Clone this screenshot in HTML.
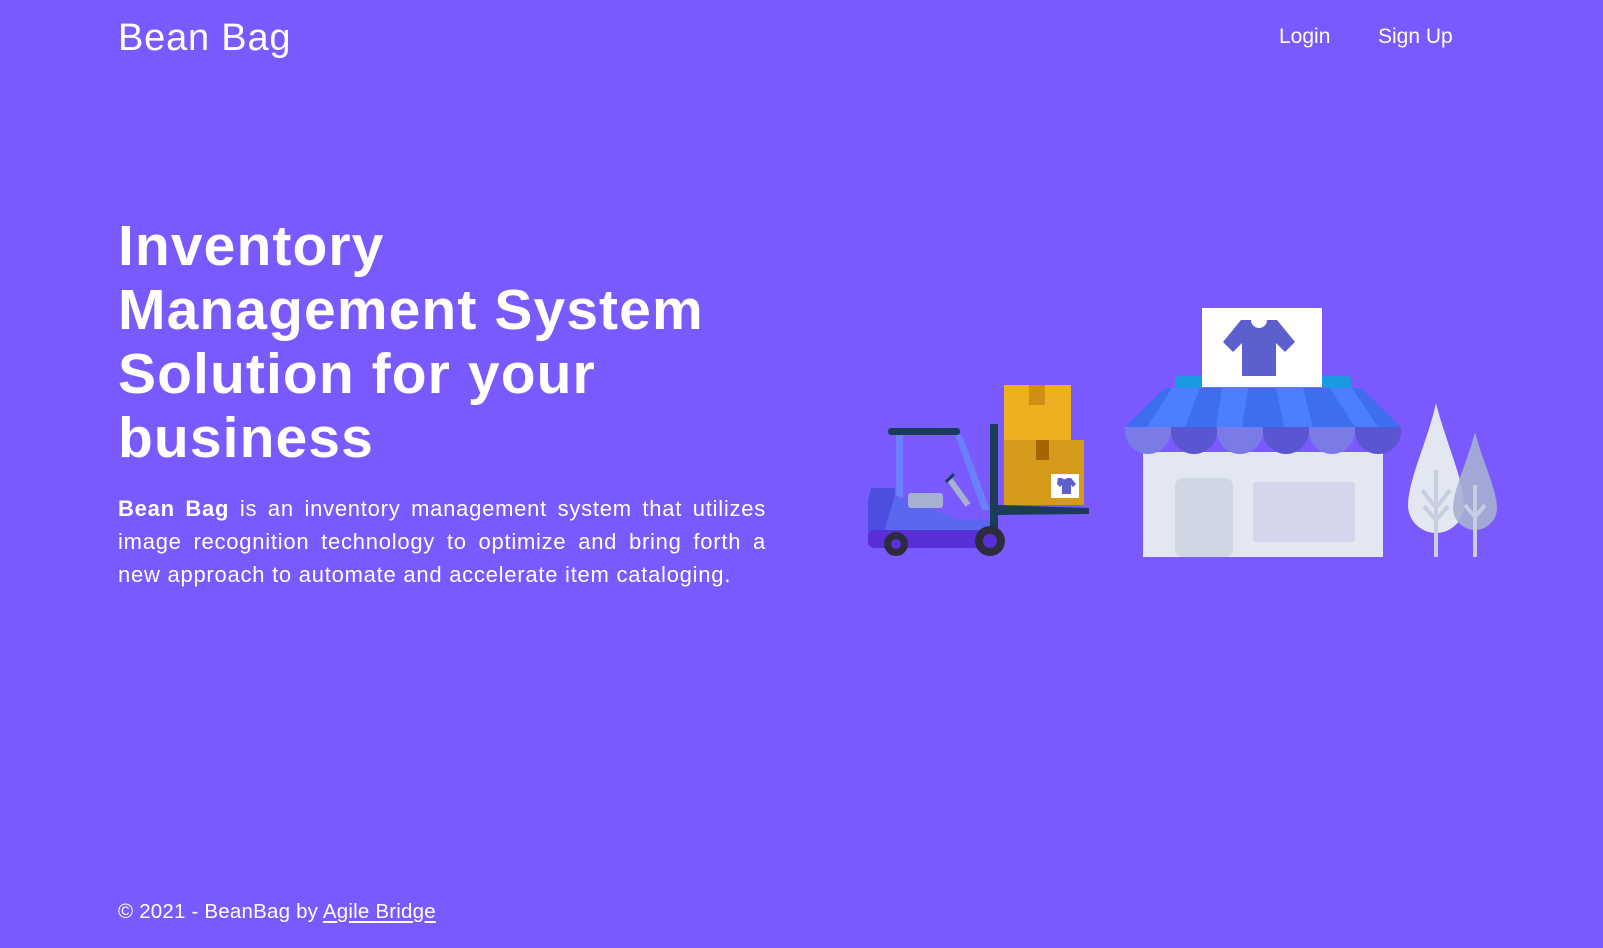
<!DOCTYPE html>
<html><head><meta charset="utf-8"><style>
html,body{margin:0;padding:0;width:1603px;height:948px;overflow:hidden;background:#7a59fe;font-family:"Liberation Sans",sans-serif;color:#fff}
.logo{position:absolute;left:118px;top:17px;font-size:38px;letter-spacing:0.8px}
.nav{position:absolute;top:25px;font-size:21px}
h1{position:absolute;left:118px;top:214px;margin:0;font-size:57px;line-height:64px;font-weight:700;width:740px;letter-spacing:1.1px}
p{position:absolute;left:118px;top:492px;margin:0;width:648px;font-size:22px;line-height:33px;text-align:justify;letter-spacing:0.75px}
.foot{position:absolute;left:118px;top:900px;font-size:20.5px;letter-spacing:0.2px}
.foot u{text-underline-offset:3px}
svg{position:absolute;left:0;top:0}
</style></head><body>
<div class="logo">Bean Bag</div>
<div class="nav" style="left:1279px">Login</div>
<div class="nav" style="left:1378px">Sign Up</div>
<h1>Inventory<br>Management System<br>Solution for your<br>business</h1>
<p><b>Bean Bag</b> is an inventory management system that utilizes image recognition technology to optimize and bring forth a new approach to automate and accelerate item cataloging.</p>
<div class="foot">© 2021 - BeanBag by <u>Agile Bridge</u></div>
<svg width="1603" height="948">
<rect x="1143" y="452" width="240" height="105" fill="#e3e7f2"/>
<rect x="1175" y="478" width="58" height="79" rx="8" fill="#d0d5e3"/>
<rect x="1253" y="482" width="102" height="60" rx="3" fill="#d3d6ea"/>
<rect x="1175" y="376" width="176" height="14" rx="4" fill="#1a9ae0"/>
<polygon points="1165,388 1361,388 1401,427 1125,427" fill="#3d6ef0"/>
<polygon points="1172,388 1200,388 1185,427 1147,427" fill="#4a80ff"/>
<polygon points="1222,388 1248,388 1242,427 1216,427" fill="#4a80ff"/>
<polygon points="1276,388 1303,388 1313,427 1284,427" fill="#4a80ff"/>
<polygon points="1330,388 1352,388 1378,427 1355,427" fill="#4a80ff"/>
<g>
<path d="M1125,427 h46 v4 a23,23 0 0 1 -46,0z" fill="#7b7be8"/>
<path d="M1171,427 h46 v4 a23,23 0 0 1 -46,0z" fill="#5a55d0"/>
<path d="M1217,427 h46 v4 a23,23 0 0 1 -46,0z" fill="#7b7be8"/>
<path d="M1263,427 h46 v4 a23,23 0 0 1 -46,0z" fill="#5a55d0"/>
<path d="M1309,427 h46 v4 a23,23 0 0 1 -46,0z" fill="#7b7be8"/>
<path d="M1355,427 h46 v4 a23,23 0 0 1 -46,0z" fill="#5a55d0"/>
</g>
<rect x="1202" y="308" width="120" height="79" fill="#fff"/>
<path d="M1241,320 h10 a8,8 0 0 0 16,0 h10 l18,22 -10,10 -9,-9 v33 h-34 v-33 l-9,9 -10,-10z" fill="#5d5fcf"/>
<path d="M1436,403 C1445,440 1464,480 1464,505 a28,28 0 0 1 -56,0 C1408,480 1428,440 1436,403z" fill="#e3e7f2"/>
<path d="M1475,432 C1482,460 1497,490 1497,508 a22,22 0 0 1 -44,0 C1453,490 1468,460 1475,432z" fill="#a6b0d0" opacity=".9"/>
<g stroke="#c8cde0" stroke-width="4" fill="none"><path d="M1436,470 v87 M1422,490 l14,18 14,-18 M1424,506 l12,14 12,-14"/></g>
<g stroke="#c8cde0" stroke-width="4" fill="none"><path d="M1475,485 v72 M1465,505 l10,12 10,-12"/></g>
<rect x="1004" y="385" width="67" height="55" fill="#ecb020"/>
<rect x="1029" y="385" width="16" height="20" fill="#d08e14"/>
<rect x="1004" y="440" width="80" height="65" fill="#d69a1a"/>
<rect x="1036" y="440" width="13" height="20" fill="#a56600"/>
<rect x="1051" y="474" width="28" height="24" fill="#fff"/>
<path d="M1058,478 h4 a3,3 0 0 0 5,0 h4 l5,6 -3,3 -2,-2 v9 h-9 v-9 l-2,2 -3,-3z" fill="#5d5fcf"/>
<rect x="990" y="424" width="8" height="130" fill="#1a3c58"/>
<polygon points="998,505 1089,508 1089,514 998,515" fill="#1a3c58"/>
<rect x="888" y="428" width="72" height="7" rx="3" fill="#1a3c58"/>
<polygon points="896,435 903,435 903,510 896,510" fill="#6a80ff"/>
<polygon points="955,435 962,435 990,510 982,510" fill="#6a80ff"/>
<path d="M868,500 l3,-12 h24 v20 l40,12 h47 v24 h-114z" fill="#4c4ee0"/>
<polygon points="895,495 960,520 990,520 990,545 880,545" fill="#5a68f0"/>
<rect x="868" y="530" width="122" height="18" rx="6" fill="#5930d8"/>
<rect x="908" y="493" width="35" height="15" rx="3" fill="#a6b0d0"/>
<path d="M950,480 l18,25" stroke="#a6b0d0" stroke-width="6"/>
<path d="M946,482 l8,-8" stroke="#1a3c58" stroke-width="3"/>
<circle cx="896" cy="544" r="12" fill="#2c2c3c"/><circle cx="896" cy="544" r="5" fill="#5930d8"/>
<circle cx="990" cy="541" r="15" fill="#2c2c3c"/><circle cx="990" cy="541" r="7" fill="#5930d8"/>
</svg>
</body></html>
